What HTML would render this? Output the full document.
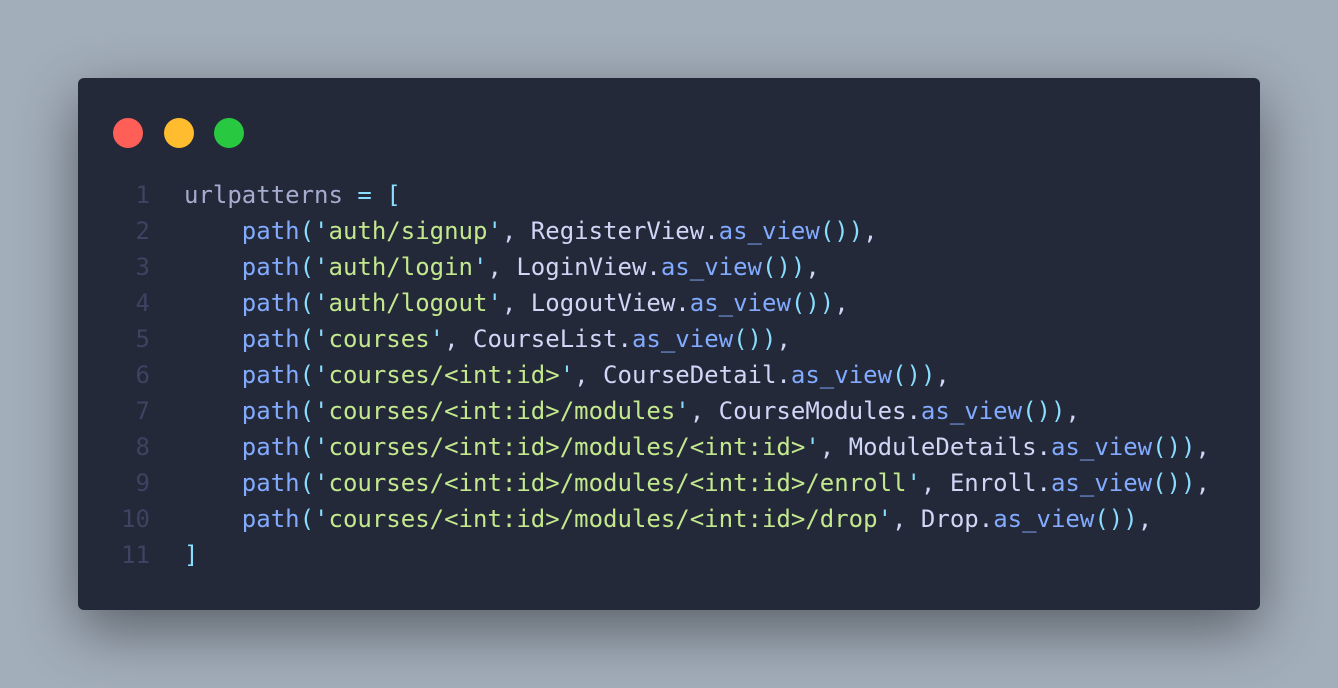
<!DOCTYPE html>
<html><head><style>
html,body{margin:0;padding:0;}
body{width:1338px;height:688px;background:#a3aebb;position:relative;overflow:hidden;}
.card{position:absolute;left:78px;top:78px;width:1182px;height:532px;background:#232939;border-radius:6px;box-shadow:0 20px 60px rgba(0,0,0,0.45);}
.dot{position:absolute;top:40px;width:30px;height:30px;border-radius:50%;}
pre{position:absolute;left:0;top:99px;margin:0;font-family:"DejaVu Sans Mono","Liberation Mono",monospace;font-size:24px;line-height:36px;color:#d0d6f5;}
.ln{display:inline-block;width:72px;text-align:right;color:#3d4360;margin-right:34px;}
.v{color:#a6accd}.p{color:#89ddff}.f{color:#82aaff}.s{color:#c3e88d}
</style></head><body>
<div class="card">
<div class="dot" style="left:35px;background:#ff5f57"></div>
<div class="dot" style="left:86px;background:#febc2e"></div>
<div class="dot" style="left:136px;background:#28c840"></div>
<pre><span class="ln">1</span><span class="v">urlpatterns</span> <span class="p">=</span> <span class="p">[</span>
<span class="ln">2</span>    <span class="f">path</span><span class="p">(</span><span class="p">'</span><span class="s">auth/signup</span><span class="p">'</span>, RegisterView.<span class="f">as_view</span><span class="p">())</span>,
<span class="ln">3</span>    <span class="f">path</span><span class="p">(</span><span class="p">'</span><span class="s">auth/login</span><span class="p">'</span>, LoginView.<span class="f">as_view</span><span class="p">())</span>,
<span class="ln">4</span>    <span class="f">path</span><span class="p">(</span><span class="p">'</span><span class="s">auth/logout</span><span class="p">'</span>, LogoutView.<span class="f">as_view</span><span class="p">())</span>,
<span class="ln">5</span>    <span class="f">path</span><span class="p">(</span><span class="p">'</span><span class="s">courses</span><span class="p">'</span>, CourseList.<span class="f">as_view</span><span class="p">())</span>,
<span class="ln">6</span>    <span class="f">path</span><span class="p">(</span><span class="p">'</span><span class="s">courses/&lt;int:id&gt;</span><span class="p">'</span>, CourseDetail.<span class="f">as_view</span><span class="p">())</span>,
<span class="ln">7</span>    <span class="f">path</span><span class="p">(</span><span class="p">'</span><span class="s">courses/&lt;int:id&gt;/modules</span><span class="p">'</span>, CourseModules.<span class="f">as_view</span><span class="p">())</span>,
<span class="ln">8</span>    <span class="f">path</span><span class="p">(</span><span class="p">'</span><span class="s">courses/&lt;int:id&gt;/modules/&lt;int:id&gt;</span><span class="p">'</span>, ModuleDetails.<span class="f">as_view</span><span class="p">())</span>,
<span class="ln">9</span>    <span class="f">path</span><span class="p">(</span><span class="p">'</span><span class="s">courses/&lt;int:id&gt;/modules/&lt;int:id&gt;/enroll</span><span class="p">'</span>, Enroll.<span class="f">as_view</span><span class="p">())</span>,
<span class="ln">10</span>    <span class="f">path</span><span class="p">(</span><span class="p">'</span><span class="s">courses/&lt;int:id&gt;/modules/&lt;int:id&gt;/drop</span><span class="p">'</span>, Drop.<span class="f">as_view</span><span class="p">())</span>,
<span class="ln">11</span><span class="p">]</span></pre>
</div>
</body></html>
